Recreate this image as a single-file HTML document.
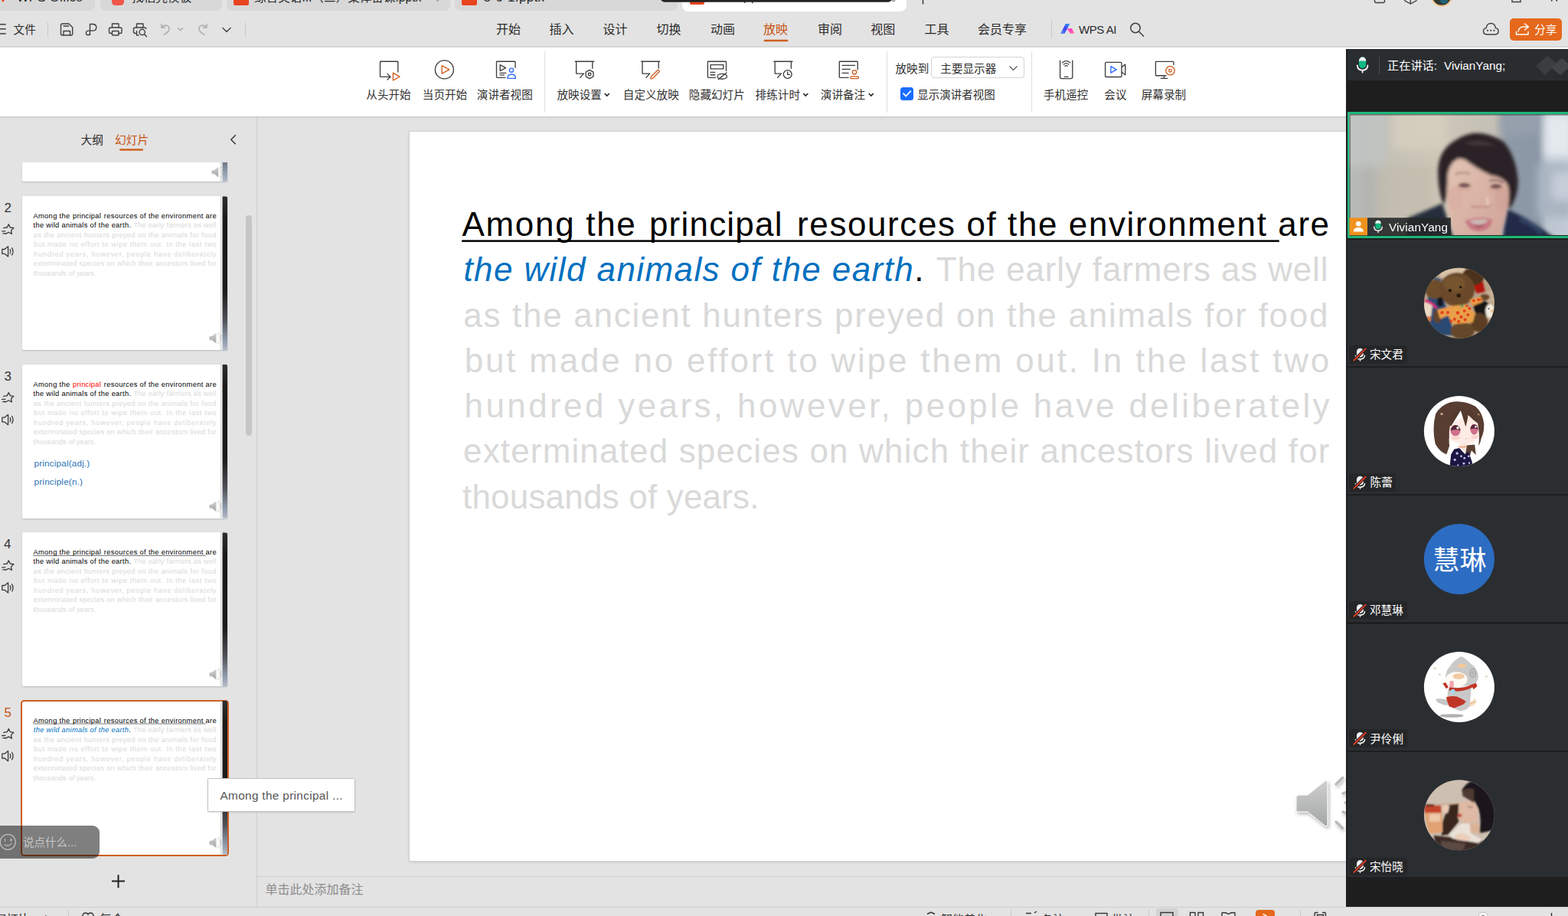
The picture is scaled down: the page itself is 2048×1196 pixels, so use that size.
<!DOCTYPE html>
<html><head><meta charset="utf-8"><title>WPS</title>
<style>
html,body{margin:0;padding:0;}
body{width:2048px;height:1196px;overflow:hidden;background:#e3e3e3;position:relative;font-family:"Liberation Sans",sans-serif;}
#root{position:absolute;left:0;top:0;width:2048px;height:1196px;overflow:hidden;}
#root div{position:absolute;box-sizing:border-box;}
#root>svg{position:absolute;left:0;top:0;}
.t{color:transparent;white-space:nowrap;font-size:10px;overflow:hidden;pointer-events:none;}
svg text{font-family:"Liberation Sans","Noto Sans CJK SC",sans-serif;}
</style></head><body><div id="root">
<svg width="0" height="0"><defs>
<rect id="UL" x="68.2" y="141.4" width="1067.6" height="2.5"/>
<g id="spk"><defs><linearGradient id="spg" x1="0" y1="0" x2="0" y2="1"><stop offset="0" stop-color="#cfcfcf"/><stop offset="1" stop-color="#a4a6a6"/></linearGradient>
<filter id="spf" x="-20%" y="-20%" width="150%" height="150%"><feDropShadow dx="1.5" dy="2.5" stdDeviation="2" flood-color="#000" flood-opacity=".3"/></filter></defs>
<g filter="url(#spf)"><path d="M1160 866 h13 l23 -18.500 q3 -1 3 2 v55 q0 3 -3 2 l-23 -18.500 h-13 q-2 0 -2 -2 v-17 q0 -2 2 -2z" fill="url(#spg)" stroke="#fff" stroke-width="1"/>
<g stroke="#b9b9b9" stroke-width="3.2" stroke-linecap="round" fill="none"><path d="M1210 852 l8.500 -8.500"/><path d="M1219 864 l10 -4"/><path d="M1222 876 l11 0"/><path d="M1219 888 l10 4"/><path d="M1210 901 l8.500 8.500"/></g></g></g>
<linearGradient id="band" x1="0" y1="0" x2="0" y2="1"><stop offset="0" stop-color="#2e2e2e"/><stop offset=".15" stop-color="#1a1a1a"/><stop offset=".62" stop-color="#1c1c1c"/><stop offset=".8" stop-color="#4c4f55"/><stop offset=".92" stop-color="#8791a2"/><stop offset="1" stop-color="#b3bcc9"/></linearGradient>
<g id="bandg"><rect x="1228" y="0" width="4" height="952" fill="#c4c4c4"/><path d="M1238.500 0 h21 q10 0 10 12 v940 h-31z" fill="url(#band)"/></g>
</defs></svg>
<div style="left:0;top:0;width:2048px;height:16px;background:#e3e3e3"></div><div style="left:-8px;top:-10px;width:132px;height:24px;background:#d8d8d8;border-radius:7px"></div><div style="left:131px;top:-10px;width:159px;height:24px;background:#d8d8d8;border-radius:7px"></div><div style="left:296px;top:-10px;width:292px;height:24px;background:#d8d8d8;border-radius:7px"></div><div style="left:594px;top:-10px;width:291px;height:24px;background:#d8d8d8;border-radius:7px"></div><div style="left:891px;top:-10px;width:293px;height:25px;background:#fff;border-radius:8px"></div><div style="left:0;top:16px;width:2048px;height:46px;background:#e3e3e3"></div><div style="left:1971.5px;top:23.8px;width:68.5px;height:29px;background:#e5681c;border-radius:5px"></div><div style="left:0;top:62px;width:2048px;height:90px;background:#fff"></div><div style="left:0;top:152px;width:2048px;height:5px;background:linear-gradient(#c9c9c9,#dedede 50%,#e3e3e3)"></div><div style="left:0;top:60px;width:2048px;height:2px;background:linear-gradient(#dcdcdc,#d2d2d2)"></div><div style="left:1216px;top:73.8px;width:121.5px;height:28.7px;background:#fff;border:1px solid #d4d4d4;border-radius:4px"></div><div style="left:1176px;top:113.8px;width:17px;height:17px;background:#1a6cff;border-radius:3.5px"></div><svg width="2048" height="1196"><path d="M-2 -6 L4 3 L10 -6 Z" fill="#e8441f"/><path d="M146 -8 h16 v10 q0 5 -5 5 h-6 q-5 0 -5 -5z" fill="#f0564a"/><rect x="305" y="-10" width="20" height="17" rx="2" fill="#e8441f"/><rect x="603" y="-10" width="20" height="17" rx="2" fill="#e8441f"/><rect x="901" y="-10" width="19" height="16" rx="2" fill="#e8441f"/><g fill="#2a2a2a"><text x="22" y="2.1" font-size="16.6" textLength="86">WPS Office</text><text x="172" y="1.6" font-size="15.6">找稻壳模板</text><text x="332" y="1.6" font-size="15.6">综合英语III（三）集体备课.pptx</text><text x="631.5" y="2.1" font-size="17" textLength="79.5">5-6-1.pptx</text></g><path d="M568 -2 l3.5 3.5 l3.5 -3.5" stroke="#aaa" stroke-width="1.3" fill="none"/><path d="M972.700 -5 v9 M982.700 -5 v9.300 M1205.500 -5 v10.500" stroke="#333" stroke-width="1.4"/><path d="M1162 -3 l5 5 M1172 -3 l-5 5" stroke="#888" stroke-width="1.2"/><rect x="863" y="-10" width="302" height="12.8" rx="5" fill="#242424"/><g fill="none" stroke="#3f3f3f" stroke-width="1.4"><rect x="1795.5" y="-10" width="13" height="13.5" rx="2"/><path d="M1809 -1 h3 v-8"/><path d="M1834 .5 l8.300 4.500 l8.300 -4.500 M1842.300 5 v-8"/><path d="M1975 -5 v7.5 h11 v-7.5"/><path d="M2025 -8 l5 5 l5 -5 M2026 1.5 l4 -4.5 l4 4.5" /></g><circle cx="1883" cy="-5.5" r="13.2" fill="#2c3a33" stroke="#f5c48a" stroke-width="2"/><circle cx="1886" cy="0" r="5" fill="#1f6f8a" opacity=".8"/><path d="M0 31.7 h7.7 M0 37.8 h7.7 M0 44 h7.7" stroke="#3f3f3f" stroke-width="1.5"/><text x="17.6" y="43.7" font-size="14.6" fill="#2b2b2b">文件</text><path d="M62.500 29 v19 M320.500 29 v19 M1373.500 26.500 v23.500" stroke="#c9c9c9" stroke-width="1"/><g fill="none" stroke="#3f3f3f" stroke-width="1.38" stroke-linejoin="round" stroke-linecap="round"><path d="M79.5 33 q0 -2 2 -2 h8.5 l4.7 4.7 v8.3 q0 2 -2 2 h-11.2 q-2 0 -2 -2z"/><path d="M83 34 h6.5 M83 46 v-5.5 h8.5 v5.5"/><path d="M117.5 45.5 v-14 h3.5 q4.8 0 4.8 4.3 q0 4.3 -4.8 4.3 h-5 q-3.6 0 -3.6 3 q0 2.8 2.6 2.8 q2.5 0 2.5 -2.8"/><path d="M146.5 36 v-5 h8.5 v5 M146.5 43.5 h-2 q-2 0 -2 -2 v-3.5 q0 -2 2 -2 h12.5 q2 0 2 2 v3.5 q0 2 -2 2 h-2.5"/><rect x="146.5" y="40.5" width="8.5" height="5.5" rx=".8"/><path d="M178.5 36 v-5 h8.5 v5 M178.5 43.5 h-2 q-2 0 -2 -2 v-3.5 q0 -2 2 -2 h12.5 q1.5 0 1.9 1.2 M178.5 40.5 v5.500 h2.5"/><circle cx="185.7" cy="42" r="3.7"/><path d="M188.5 44.8 l3 3"/><path d="M291 36.500 l5 5 l5 -5"/></g><g fill="none" stroke="#a9a9a9" stroke-width="1.4" stroke-linejoin="round" stroke-linecap="round"><path d="M211 31.5 v4.5 h4.5 M211.2 36 q3 -4 7 -2.6 q3.6 1.6 2.6 5.6 q-.8 2.6 -6.8 6.5"/><path d="M232.5 36.8 l3 3 l3 -3"/><path d="M270 31.5 v4.5 h-4.5 M269.8 36 q-3 -4 -7 -2.6 q-3.600 1.600 -2.600 5.600 q.8 2.600 6.800 6.500"/></g><g fill="#2b2b2b" font-size="16"><text x="648" y="44.300">开始</text><text x="717.5" y="44.300">插入</text><text x="787.5" y="44.300">设计</text><text x="857.5" y="44.300">切换</text><text x="928" y="44.300">动画</text><text x="997" y="44.300" fill="#c8520f">放映</text><text x="1068" y="44.300">审阅</text><text x="1137.2" y="44.300">视图</text><text x="1207.5" y="44.300">工具</text><text x="1277" y="44.300">会员专享</text></g><rect x="997.5" y="51.7" width="32" height="2.6" rx="1.3" fill="#d0601f"/><defs><linearGradient id="ai1" x1="0" y1="1" x2="1" y2="0"><stop offset="0" stop-color="#5a9cf2"/><stop offset=".5" stop-color="#3f3ff6"/><stop offset="1" stop-color="#2fa8e2"/></linearGradient><linearGradient id="ai2" x1="0" y1="0" x2="1" y2="1"><stop offset="0" stop-color="#ff3fc4"/><stop offset=".6" stop-color="#ff4fb8"/><stop offset="1" stop-color="#ffa0a8"/></linearGradient></defs><path d="M1385 43.900 L1391.900 30.900 h5.500 L1390.500 43.900z" fill="url(#ai1)"/><path d="M1393.600 37.400 l6.400 -.5 l3.5 7 h-5.200z" fill="url(#ai2)"/><text x="1409" y="43.900" font-size="15" fill="#2b2b2b" textLength="49.500">WPS AI</text><g fill="none" stroke="#3f3f3f" stroke-width="1.5" stroke-linecap="round"><circle cx="1483" cy="36.5" r="6.2"/><path d="M1487.6 41.2 l6 6"/></g><g fill="none" stroke="#3f3f3f" stroke-width="1.45"><path d="M1942 45 q-4.5 0 -4.5 -4.2 q0 -3.6 3.6 -4.2 q1 -6 6.2 -6 q5.2 0 6.2 6 q3.6 .6 3.6 4.2 q0 4.2 -4.5 4.2z"/></g><g fill="#3f3f3f"><circle cx="1943" cy="39.8" r="1.1"/><circle cx="1947.2" cy="39.8" r="1.1"/><circle cx="1951.4" cy="39.8" r="1.1"/></g><g fill="none" stroke="#fff" stroke-width="1.5" stroke-linecap="round" stroke-linejoin="round"><path d="M1991.5 31 l5 4 l-5 4 M1996 35 h-6 q-6 0 -7 6"/><path d="M1980.5 41.5 v3.5 h15.5 v-3.5"/></g><text x="2004" y="43.700" font-size="14.8" fill="#ffffff">分享</text><path d="M711.5 67 v80 M1158.5 67 v80 M1347.5 67 v80" stroke="#e2e2e2" stroke-width="1.3"/><g fill="#303030" font-size="14.6"><text x="478.3" y="128.600">从头开始</text><text x="551.8" y="128.600">当页开始</text><text x="622.8" y="128.600">演讲者视图</text><text x="727.5" y="128.600">放映设置</text><text x="813.8" y="128.600">自定义放映</text><text x="899.8" y="128.600">隐藏幻灯片</text><text x="986.6" y="128.600">排练计时</text><text x="1071.8" y="128.600">演讲备注</text><text x="1363" y="128.600">手机遥控</text><text x="1442.3" y="128.600">会议</text><text x="1490.7" y="128.600">屏幕录制</text></g><path d="M789.8 122 l3 3 l3 -3" fill="none" stroke="#222" stroke-width="1.6"/><path d="M1049.3 122 l3 3 l3 -3" fill="none" stroke="#222" stroke-width="1.6"/><path d="M1134.8 122 l3 3 l3 -3" fill="none" stroke="#222" stroke-width="1.6"/><g fill="none" stroke="#3f3f3f" stroke-width="1.35" stroke-linejoin="round" stroke-linecap="round"><path d="M519.8 94 v-13 q0 -.8 -.8 -.8 h-21.7 q-.8 0 -.8 .8 v18.5 q0 .8 .8 .8 h12.7 M506 96.6 l4 3.7 l-4 3.7"/><circle cx="580.4" cy="90.9" r="12"/><path d="M673 88.3 v-7.3 q0 -.8 -.8 -.8 h-22.9 q-.8 0 -.8 .8 v19.5 q0 .8 .8 .8 h10.7 M653.2 84.6 l7.3 4 l-7.3 4z M653 95.4 h7.7 M653 97.8 h5.4"/><path d="M751.3 80.2 h24.5 M752.7 80.2 v15.9 h9.8 l-4.7 5.2 M773.8 80.2 v9"/><path d="M770.1 91.3 l4.9 2.85 v5.7 l-4.9 2.85 l-4.9 -2.85 v-5.7z"/><circle cx="770.1" cy="97" r="1.8"/><path d="M837.7 80.2 h24 M839 80.2 v15.9 h9.7 l-4.7 5.2 M860.2 80.2 v9"/><path d="M948.5 92.5 v-11.5 q0 -.8 -.8 -.8 h-22.5 q-.8 0 -.8 .8 v19.5 q0 .8 .8 .8 h9.2"/><rect x="928.1" y="84.6" width="16.7" height="5.3"/><path d="M928 94.3 h5.8 M928 97.7 h5.8"/><ellipse cx="943.200" cy="99.800" rx="6.200" ry="3.400"/><path d="M938.300 103.600 l10.700 -8.600"/><path d="M1010.8 80.2 h24.2 M1012.2 80.2 v15.9 h8.2 l-4.7 5.2 M1033.4 80.2 v9"/><circle cx="1028.7" cy="97" r="5.4"/><path d="M1028.7 93.8 v3.6 h2.8"/><path d="M1120.2 90.9 v-9.9 q0 -.8 -.8 -.8 h-22.3 q-.8 0 -.8 .8 v19.5 q0 .8 .8 .8 h11 M1100.1 85.4 h16.4 M1100.1 90.4 h10.1 M1100.1 95.4 h8"/><path d="M1384.6 79.2 v21.4 q0 2 2 2 h12.2 q2 0 2 -2 v-21.4 M1390.3 100.3 h4.7"/><g stroke-width="1.15"><path d="M1387.400 82 q5.200 -4.600 10.400 0 M1389.200 84.200 q3.400 -3 6.800 0 M1390.900 86.300 q1.700 -1.500 3.400 0"/></g><rect x="1443.6" y="81.3" width="21.4" height="19.2" rx="1.5"/><path d="M1465 87.8 l4.7 -3.7 v13.6 l-4.7 -3.7"/><path d="M1532.9 84.6 v-3.4 q0 -.8 -.8 -.8 h-21.9 q-.8 0 -.8 .8 v16.7 q0 .8 .8 .8 h12.8 M1520.4 98.7 v3.7 M1516.2 102.4 h8.4"/></g><g fill="none" stroke="#cf5f22" stroke-width="1.35" stroke-linejoin="round"><path d="M513.4 95.1 l8.6 5 l-8.6 4.9z"/><path d="M577.2 85.7 l9.6 5.2 l-9.6 5.2z"/><path d="M850.200 100.200 l8.300 -8.300 q1 -1 2.100 .1 q1.100 1.100 .1 2.100 l-8.300 8.300 l-2.600 .5z"/><circle cx="1116" cy="94.3" r="2.7"/><rect x="1110.8" y="99.8" width="10.7" height="2.8" rx="1.4"/><circle cx="1528.4" cy="92.2" r="5.7"/><circle cx="1528.4" cy="92.2" r="1.8"/></g><g fill="none" stroke="#2b6bff" stroke-width="1.35" stroke-linejoin="round"><circle cx="668" cy="91.7" r="2.6"/><path d="M662.9 102.4 q0 -5.4 5.2 -5.4 q5.3 0 5.3 5.4z"/><path d="M1450.9 86.7 l7.3 4.2 l-7.3 4.2z"/></g><text x="1169.5" y="94.500" font-size="14.6" fill="#303030">放映到</text><text x="1228.3" y="94.500" font-size="14.6" fill="#303030">主要显示器</text><path d="M1318.5 86.5 l5 5 l5 -5" fill="none" stroke="#555" stroke-width="1.2"/><path d="M1180 122.1 l3.3 3.4 l6 -6.4" fill="none" stroke="#fff" stroke-width="1.8" stroke-linecap="round" stroke-linejoin="round"/><text x="1198.2" y="128.600" font-size="14.5" fill="#303030">显示演讲者视图</text></svg><div class="t" style="left:0;top:20px;width:1500px;height:12px">文件 开始 插入 设计 切换 动画 放映 审阅 视图 工具 会员专享 WPS AI 分享</div><div class="t" style="left:470px;top:110px;width:1200px;height:12px">从头开始 当页开始 演讲者视图 放映设置 自定义放映 隐藏幻灯片 排练计时 演讲备注 放映到 主要显示器 显示演讲者视图 手机遥控 会议 屏幕录制</div><div style="left:335px;top:153px;width:1px;height:1031px;background:#cfcfcf"></div><div style="left:336px;top:1144px;width:1712px;height:1px;background:#cfcfcf"></div><div style="left:321px;top:280.5px;width:8px;height:288px;background:#c6c6c6;border-radius:4px"></div><div style="left:29px;top:212px;width:268px;height:25px;background:#fff;box-shadow:0 1px 2px rgba(0,0,0,.18);border-radius:0 0 2px 2px"></div><div style="left:29px;top:256.2px;width:268px;height:201px;background:#fff;box-shadow:0 1px 2px rgba(0,0,0,.18);border-radius:2px"></div><div style="left:29px;top:475.8px;width:268px;height:201px;background:#fff;box-shadow:0 1px 2px rgba(0,0,0,.18);border-radius:2px"></div><div style="left:29px;top:695.2px;width:268px;height:201px;background:#fff;box-shadow:0 1px 2px rgba(0,0,0,.18);border-radius:2px"></div><div style="left:29px;top:914.9px;width:268px;height:201px;background:#fff;box-shadow:0 1px 2px rgba(0,0,0,.18);border-radius:2px"></div><div style="left:27.3px;top:914.3px;width:271.4px;height:204px;border:2px solid #cf5f22;border-radius:4.5px"></div><div style="left:533.6px;top:170.600px;width:1271px;height:954.400px;background:#fff;border:1px solid #d2d2d2;box-shadow:0 1px 3px rgba(0,0,0,.12)"></div><div class="t" style="left:603px;top:270px;width:1130px;height:400px;white-space:normal;font-size:20px">Among the principal resources of the environment are the wild animals of the earth. The early farmers as well as the ancient hunters preyed on the animals for food but made no effort to wipe them out. In the last two hundred years, however, people have deliberately exterminated species on which their ancestors lived for thousands of years.</div><div style="left:0;top:1184px;width:2048px;height:12px;background:#e3e3e3;border-top:1px solid #cdcdcd"></div><div style="left:1510px;top:1186px;width:29px;height:12px;background:#d2d2d2;border-radius:3px"></div><div style="left:1640px;top:1187.5px;width:25px;height:12px;background:#e5681c;border-radius:4px"></div><svg width="2048" height="1196"><text x="105.5" y="188" font-size="14.8" fill="#2b2b2b">大纲</text><text x="150" y="188" font-size="14.8" fill="#c8520f">幻灯片</text><rect x="156" y="194.2" width="31" height="2.5" rx="1.2" fill="#d0601f"/><path d="M307.8 176.3 l-6 6 l6 6" fill="none" stroke="#333" stroke-width="1.4"/><svg x="29" y="212" width="268" height="25" viewBox="0 833.6 1269.3 118.4" preserveAspectRatio="none" overflow="hidden"><use href="#bandg"/><use href="#spk" transform="translate(14 16)"/></svg><svg x="29" y="256.2" width="268" height="201" viewBox="0 0 1269.3 952" preserveAspectRatio="none" overflow="hidden"><use href="#bandg"/><g font-size="44" fill="#000"><text x="68.4" y="136" textLength="226.4">Among the</text><text x="312.9" y="136" textLength="173.6">principal</text><text x="506.1" y="136" textLength="695">resources of the environment are</text><text x="69" y="195.2" textLength="603.5">the wild animals of the earth.</text><text x="688.7" y="195.2" textLength="510.8" fill="#d9d9d9">The early farmers as well</text><g fill="#d9d9d9"><text x="70.2" y="254.5" textLength="1129.3">as the ancient hunters preyed on the animals for food</text><text x="71.7" y="313.8" textLength="1129.5">but made no effort to wipe them out. In the last two</text><text x="71.6" y="373" textLength="1130">hundred years, however, people have deliberately</text><text x="70" y="432.2" textLength="1131.5">exterminated species on which their ancestors lived for</text><text x="69" y="491.5" textLength="387.5">thousands of years.</text></g></g><use href="#spk"/></svg><text x="5.5" y="277.100" font-size="17" fill="#333">2</text><g fill="none" stroke="#3a3a3a" stroke-width="1.3" stroke-linejoin="round" stroke-linecap="round"><path d="M4.7 297.7 L9.3 297.0 L11.3 292.90000000000003 L13.3 297.0 L17.9 297.7 L14.5 300.90000000000003 L15.4 305.40000000000003 L11.3 303.2 L7.2 305.40000000000003 M2.600 301.8 h4.300 M3.800 304.9 h3.600"/><path d="M2.800 325.5 h3.200 l4.600 -3.800 v13.400 l-4.600 -3.800 h-3.200z M13.200 325.79999999999995 q1.600 2.600 0 5.200 M15.600 323.79999999999995 q2.900 4.600 0 9.200"/></g><svg x="29" y="475.8" width="268" height="201" viewBox="0 0 1269.3 952" preserveAspectRatio="none" overflow="hidden"><use href="#bandg"/><g font-size="44" fill="#000"><text x="68.4" y="136" textLength="226.4">Among the</text><text x="312.9" y="136" textLength="173.6" fill="#f00">principal</text><text x="506.1" y="136" textLength="695">resources of the environment are</text><text x="69" y="195.2" textLength="603.5">the wild animals of the earth.</text><text x="688.7" y="195.2" textLength="510.8" fill="#d9d9d9">The early farmers as well</text><g fill="#d9d9d9"><text x="70.2" y="254.5" textLength="1129.3">as the ancient hunters preyed on the animals for food</text><text x="71.7" y="313.8" textLength="1129.5">but made no effort to wipe them out. In the last two</text><text x="71.6" y="373" textLength="1130">hundred years, however, people have deliberately</text><text x="70" y="432.2" textLength="1131.5">exterminated species on which their ancestors lived for</text><text x="69" y="491.5" textLength="387.5">thousands of years.</text></g><g font-size="56" fill="#2e75b6"><text x="73.8" y="632" textLength="344.4">principal(adj.)</text><text x="73.8" y="746" textLength="300.4">principle(n.)</text></g></g><use href="#spk"/></svg><text x="5.5" y="496.700" font-size="17" fill="#333">3</text><g fill="none" stroke="#3a3a3a" stroke-width="1.3" stroke-linejoin="round" stroke-linecap="round"><path d="M4.7 517.3 L9.3 516.6 L11.3 512.5 L13.3 516.6 L17.9 517.3 L14.5 520.5 L15.4 525.0 L11.3 522.8 L7.2 525.0 M2.600 521.4 h4.300 M3.800 524.5 h3.600"/><path d="M2.800 545.1 h3.200 l4.600 -3.800 v13.400 l-4.600 -3.800 h-3.200z M13.200 545.4 q1.600 2.600 0 5.200 M15.600 543.4 q2.900 4.600 0 9.200"/></g><svg x="29" y="695.2" width="268" height="201" viewBox="0 0 1269.3 952" preserveAspectRatio="none" overflow="hidden"><use href="#bandg"/><g font-size="44" fill="#000"><text x="68.4" y="136" textLength="226.4">Among the</text><text x="312.9" y="136" textLength="173.6">principal</text><text x="506.1" y="136" textLength="695">resources of the environment are</text><use href="#UL" fill="#000"/><text x="69" y="195.2" textLength="603.5">the wild animals of the earth.</text><text x="688.7" y="195.2" textLength="510.8" fill="#d9d9d9">The early farmers as well</text><g fill="#d9d9d9"><text x="70.2" y="254.5" textLength="1129.3">as the ancient hunters preyed on the animals for food</text><text x="71.7" y="313.8" textLength="1129.5">but made no effort to wipe them out. In the last two</text><text x="71.6" y="373" textLength="1130">hundred years, however, people have deliberately</text><text x="70" y="432.2" textLength="1131.5">exterminated species on which their ancestors lived for</text><text x="69" y="491.5" textLength="387.5">thousands of years.</text></g></g><use href="#spk"/></svg><text x="5" y="716.100" font-size="17" fill="#333">4</text><g fill="none" stroke="#3a3a3a" stroke-width="1.3" stroke-linejoin="round" stroke-linecap="round"><path d="M4.7 736.7 L9.3 736.0000000000001 L11.3 731.9000000000001 L13.3 736.0000000000001 L17.9 736.7 L14.5 739.9000000000001 L15.4 744.4000000000001 L11.3 742.2 L7.2 744.4000000000001 M2.600 740.8000000000001 h4.300 M3.800 743.9000000000001 h3.600"/><path d="M2.800 764.5 h3.200 l4.600 -3.800 v13.400 l-4.600 -3.800 h-3.200z M13.200 764.8000000000001 q1.600 2.600 0 5.200 M15.600 762.8000000000001 q2.900 4.600 0 9.200"/></g><svg x="29" y="914.9" width="268" height="201" viewBox="0 0 1269.3 952" preserveAspectRatio="none" overflow="hidden"><use href="#bandg"/><g font-size="44" fill="#000"><text x="68.4" y="136" textLength="226.4">Among the</text><text x="312.9" y="136" textLength="173.6">principal</text><text x="506.1" y="136" textLength="695">resources of the environment are</text><use href="#UL" fill="#000"/><text x="70.4" y="195.2" textLength="601"><tspan fill="#0070c0" font-style="italic">the wild animals of the earth</tspan>.</text><text x="687.8" y="195.2" textLength="511.7" fill="#d9d9d9">The early farmers as well</text><g fill="#d9d9d9"><text x="70.2" y="254.5" textLength="1129.3">as the ancient hunters preyed on the animals for food</text><text x="71.7" y="313.8" textLength="1129.5">but made no effort to wipe them out. In the last two</text><text x="71.6" y="373" textLength="1130">hundred years, however, people have deliberately</text><text x="70" y="432.2" textLength="1131.5">exterminated species on which their ancestors lived for</text><text x="69" y="491.5" textLength="387.5">thousands of years.</text></g></g><use href="#spk"/></svg><text x="5.5" y="935.800" font-size="17" fill="#c8520f">5</text><g fill="none" stroke="#3a3a3a" stroke-width="1.3" stroke-linejoin="round" stroke-linecap="round"><path d="M4.7 956.4 L9.3 955.7 L11.3 951.6 L13.3 955.7 L17.9 956.4 L14.5 959.6 L15.4 964.1 L11.3 961.9 L7.2 964.1 M2.600 960.5 h4.300 M3.800 963.6 h3.600"/><path d="M2.800 984.1999999999999 h3.200 l4.600 -3.800 v13.400 l-4.600 -3.800 h-3.200z M13.200 984.5 q1.600 2.600 0 5.200 M15.600 982.5 q2.900 4.600 0 9.200"/></g><path d="M146 1150.6 h17 M154.5 1142.2 v17" stroke="#222" stroke-width="2"/><svg x="535" y="172" width="1269.3" height="952" viewBox="0 0 1269.3 952" overflow="hidden"><use href="#bandg"/><g font-size="44" fill="#000"><text x="68.4" y="136" textLength="226.4">Among the</text><text x="312.9" y="136" textLength="173.6">principal</text><text x="506.1" y="136" textLength="695">resources of the environment are</text><use href="#UL" fill="#000"/><text x="70.4" y="195.2" textLength="601"><tspan fill="#0070c0" font-style="italic">the wild animals of the earth</tspan>.</text><text x="687.8" y="195.2" textLength="511.7" fill="#d9d9d9">The early farmers as well</text><g fill="#d9d9d9"><text x="70.2" y="254.5" textLength="1129.3">as the ancient hunters preyed on the animals for food</text><text x="71.7" y="313.8" textLength="1129.5">but made no effort to wipe them out. In the last two</text><text x="71.6" y="373" textLength="1130">hundred years, however, people have deliberately</text><text x="70" y="432.2" textLength="1131.5">exterminated species on which their ancestors lived for</text><text x="69" y="491.5" textLength="387.5">thousands of years.</text></g></g><use href="#spk"/></svg><text x="346.5" y="1167" font-size="16" fill="#8c8c8c">单击此处添加备注</text><text transform="translate(-8 0)" x="0.5" y="1205.900" font-size="15.500" fill="#2b2b2b">幻灯片 5 / 13</text><text x="130.2" y="1205.900" font-size="15.500" fill="#2b2b2b">复合</text><text x="1229.2" y="1205.700" font-size="15" fill="#2b2b2b">智能美化</text><text x="1360.2" y="1205.700" font-size="15" fill="#2b2b2b">备注</text><text x="1452.2" y="1205.700" font-size="15" fill="#2b2b2b">批注</text><text x="1757.5" y="1205.900" font-size="15.500" fill="#2b2b2b" textLength="38">100%</text><path d="M89.5 1188 v8 M1320.5 1188 v8 M1500.5 1188 v8 M1698.5 1188 v8" stroke="#c9c9c9"/><g fill="none" stroke="#333" stroke-width="1.4"><path d="M108 1196 q0 -4 4 -4 q2 0 3 2 q1 -2 3 -2 q4 0 4 4"/><path d="M1211 1193.5 l5 -2.5 l5 2.5"/><path d="M1340 1192.5 h7 M1351 1192 l3 -2"/><rect x="1431" y="1192.5" width="15" height="8"/><rect x="1516" y="1191.5" width="16" height="8"/><rect x="1554.5" y="1191.5" width="6.5" height="8"/><rect x="1565" y="1191.5" width="6.5" height="8"/><path d="M1596 1196 v-4 q4 -1.5 8.5 1.5 q4.500 -3 8.500 -1.500 v4"/><path d="M1717 1196 v-3 q0 -1.500 1.500 -1.500 h3 M1727 1191.500 h3 q1.500 0 1.500 1.500 v3 M1720.500 1196 v-1.500 h8 v1.500"/><path d="M2026.500 1192 v4"/></g><circle cx="1937" cy="1197" r="6" fill="#fff" stroke="#bbb" stroke-width="1"/><circle cx="1937" cy="1197" r="2.5" fill="#888"/><path d="M1649.500 1193.500 l5 2.500" stroke="#fff" stroke-width="1.5"/></svg><div style="left:-10px;top:1077.5px;width:139.5px;height:43px;background:rgba(0,0,0,.5);border-radius:9px"></div><div style="left:271.300px;top:1015.600px;width:192.700px;height:44.400px;background:#fff;border:1px solid #c2c2c2;border-radius:1.5px;box-shadow:0 1px 2px rgba(0,0,0,.12)"></div><div class="t" style="left:287px;top:1030px;width:170px;height:14px">Among the principal ...</div><svg width="2048" height="1196"><g fill="none" stroke="#bcbcbc" stroke-width="1.3" stroke-linecap="round" stroke-linejoin="round"><circle cx="10.300" cy="1099.400" r="10"/><path d="M6.200 1102.800 q4.600 3.400 8.600 -1.400 M6.500 1095.600 v2.600 M15.300 1095.400 l-2 1.400 l2 1.400"/></g><text x="30" y="1105.200" font-size="14.5" fill="#c6c6c6">说点什么...</text><text x="287.5" y="1043.900" font-size="15.3" fill="#555555" textLength="160">Among the principal ...</text></svg><div style="left:1758.3px;top:63.8px;width:291px;height:1120.4px;background:#1e1e1e"></div><div style="left:1759.6px;top:63.800px;width:291px;height:41.700px;background:#2a2d30"></div><div style="left:1759.5px;top:146.3px;width:292px;height:164.7px;background:#1fb67b"></div><div style="left:1759.6px;top:313.2px;width:291px;height:165.1px;background:#2b2e31"></div><div style="left:1762.3px;top:451.1px;width:75.6px;height:23.800px;background:#242628;border-radius:2px"></div><div style="left:1759.6px;top:480.3px;width:291px;height:165.1px;background:#2b2e31"></div><div style="left:1762.3px;top:618.2px;width:60.5px;height:23.800px;background:#242628;border-radius:2px"></div><div style="left:1759.6px;top:647.4px;width:291px;height:165.1px;background:#2b2e31"></div><div style="left:1762.3px;top:785.3px;width:75.6px;height:23.800px;background:#242628;border-radius:2px"></div><div style="left:1759.6px;top:814.5px;width:291px;height:165.1px;background:#2b2e31"></div><div style="left:1762.3px;top:952.4px;width:75.6px;height:23.800px;background:#242628;border-radius:2px"></div><div style="left:1759.6px;top:981.6px;width:291px;height:163.9px;background:#2b2e31"></div><div style="left:1762.3px;top:1119.5px;width:75.6px;height:23.800px;background:#242628;border-radius:2px"></div><svg width="2048" height="1196"><g transform="translate(1779.6 84.6) scale(1.0)"><rect x="-4.6" y="-10" width="9.2" height="14.4" rx="4.6" fill="#10b981"/><path d="M-4.6 -4.600 v-.8 a4.600 4.600 0 0 1 9.200 0 v.8 q-4.600 -1.600 -9.200 0z" fill="#f4f4f4"/><path d="M-6.800 .8 q.4 6.200 6.800 6.200 q6.400 0 6.800 -6.200 M0 7 v3" fill="none" stroke="#f4f4f4" stroke-width="1.900" stroke-linecap="round"/></g><path d="M1801.5 73.500 v23.500" stroke="#45484b" stroke-width="1"/><text x="1812" y="91.200" font-size="15.2" fill="#ffffff">正在讲话:</text><text x="1886" y="91.200" font-size="15.3" fill="#ffffff" textLength="80.200">VivianYang;</text><g fill="#3b3e41"><path d="M2006 86 l15 -13 l12 10 l-15 15z"/><path d="M2026 88 l14 -12 l12 10 l-14 12z" fill="#424548"/></g><svg x="1762.5" y="149.3" width="286" height="158.7" viewBox="0 0 286 158.7" overflow="hidden">
<defs><filter id="b6" x="-30%" y="-30%" width="160%" height="160%"><feGaussianBlur stdDeviation="40"/></filter><filter id="b3" x="-30%" y="-30%" width="160%" height="160%"><feGaussianBlur stdDeviation="14"/></filter><filter id="b2" x="-30%" y="-30%" width="160%" height="160%"><feGaussianBlur stdDeviation="16"/></filter><filter id="b1" x="-30%" y="-30%" width="160%" height="160%"><feGaussianBlur stdDeviation="10"/></filter>
<linearGradient id="vbg" x1="0" y1="0" x2="1" y2="0"><stop offset="0" stop-color="#b9bcba"/><stop offset=".1" stop-color="#b4b5b1"/><stop offset=".2" stop-color="#c6c2b6"/><stop offset=".42" stop-color="#cec7b8"/><stop offset=".66" stop-color="#c4c0b6"/><stop offset=".72" stop-color="#8f9aa8"/><stop offset=".86" stop-color="#8b97a6"/><stop offset=".9" stop-color="#bcc5cf"/><stop offset="1" stop-color="#c3ccd6"/></linearGradient>
<linearGradient id="skin" x1="0" y1="0" x2="1" y2="1"><stop offset="0" stop-color="#e3c4b4"/><stop offset=".5" stop-color="#d9b3a5"/><stop offset="1" stop-color="#cfa397"/></linearGradient></defs>
<g transform="translate(-2.5 -3.3) scale(.140625)">
<rect width="2060" height="1190" fill="url(#vbg)"/>
<g filter="url(#b6)"><rect x="-50" y="-50" width="420" height="560" fill="#c2c5c3" opacity=".8"/><rect x="420" y="-50" width="500" height="400" fill="#d6cfbf" opacity=".8"/><rect x="300" y="500" width="500" height="500" fill="#c2bbad" opacity=".7"/><rect x="1830" y="20" width="260" height="400" fill="#e4e9ee"/><rect x="1760" y="480" width="330" height="500" fill="#a9b4c1"/><rect x="1900" y="560" width="190" height="260" fill="#c6ced8"/><rect x="1450" y="-50" width="320" height="260" fill="#96a0ad"/></g>
<g filter="url(#b2)"><path d="M540 1200 L560 985 Q700 930 880 850 L1000 1200z" fill="#262d3d"/><path d="M1440 1200 L1470 900 Q1700 990 1960 1200z" fill="#212c46"/><path d="M1600 1000 q120 40 200 130" stroke="#34466a" stroke-width="30" fill="none"/></g>
<g filter="url(#b3)"><path d="M840 540 Q850 350 1000 265 Q1200 125 1450 275 Q1570 420 1585 650 Q1580 800 1500 910 L1440 700 L1000 500 L940 700 L900 870 Q840 760 840 540z" fill="#2b2427"/>
<path d="M930 640 Q920 520 1010 430 L1250 470 L1470 640 Q1510 700 1495 830 Q1490 950 1440 1080 L1420 1200 L1010 1200 Q960 1060 935 920 Q915 800 930 640z" fill="url(#skin)"/>
<path d="M985 470 Q1000 370 1100 315 Q1300 240 1450 390 Q1530 500 1500 690 Q1440 600 1330 590 Q1180 520 1060 420 Q1010 440 985 470z" fill="#2b2427"/><path d="M1080 300 q140 -60 300 20 q-140 -20 -300 -20z" fill="#4a3c40"/></g>
<g filter="url(#b1)"><ellipse cx="1085" cy="683" rx="55" ry="20" fill="#4a3436"/><ellipse cx="1380" cy="692" rx="52" ry="20" fill="#4a3436"/><ellipse cx="1085" cy="700" rx="75" ry="40" fill="#c9948c" opacity=".35"/><ellipse cx="1380" cy="708" rx="72" ry="40" fill="#c9948c" opacity=".35"/><path d="M1000 580 q70 -30 140 -5" stroke="#b39084" stroke-width="16" fill="none"/><path d="M1320 640 q70 -20 130 20" stroke="#8d6e68" stroke-width="16" fill="none"/>
<ellipse cx="1000" cy="800" rx="70" ry="110" fill="#d6a79e" opacity=".45"/><ellipse cx="1430" cy="810" rx="60" ry="110" fill="#cf9c93" opacity=".45"/>
<path d="M1150 870 q40 25 80 8 q50 18 100 -10" stroke="#b98676" stroke-width="12" fill="none"/><path d="M1290 790 q20 40 10 80" stroke="#e6cbc0" stroke-width="22" fill="none"/>
<path d="M1095 1010 Q1220 960 1345 1000 Q1330 1100 1220 1110 Q1120 1100 1095 1010z" fill="#c87882"/><path d="M1130 1012 Q1220 985 1310 1008 Q1270 1050 1220 1048 Q1160 1046 1130 1012z" fill="#cdb9b6"/><path d="M1160 1045 q60 20 120 -4 q-20 30 -60 32 q-40 -2 -60 -28z" fill="#a34c5c"/></g>
</g>
<rect x=".5" y=".5" width="290" height="157.7" fill="none" stroke="#1f2a25" stroke-width="1"/>
</svg><rect x="1762.600" y="284.300" width="23.400" height="23" fill="#f0921e"/><rect x="1786" y="284.300" width="109" height="23" fill="#262829" fill-opacity=".9"/><g fill="#fff"><circle cx="1774.300" cy="292.300" r="3.300"/><path d="M1767.800 302.500 q0 -5.500 6.500 -5.500 q6.500 0 6.500 5.500z"/></g><g transform="translate(1800 295.6) scale(0.78)"><rect x="-4.6" y="-10" width="9.2" height="14.4" rx="4.6" fill="#10b981"/><path d="M-4.6 -4.600 v-.8 a4.600 4.600 0 0 1 9.200 0 v.8 q-4.600 -1.600 -9.200 0z" fill="#f4f4f4"/><path d="M-6.800 .8 q.4 6.200 6.800 6.200 q6.400 0 6.800 -6.200 M0 7 v3" fill="none" stroke="#f4f4f4" stroke-width="1.900" stroke-linecap="round"/></g><text x="1814" y="301.500" font-size="15.3" fill="#ffffff" textLength="77">VivianYang</text><defs><clipPath id="avc"><circle cx="0" cy="0" r="46"/></clipPath><filter id="ab" x="-20%" y="-20%" width="140%" height="140%"><feGaussianBlur stdDeviation="1.2"/></filter><filter id="ab2" x="-20%" y="-20%" width="140%" height="140%"><feGaussianBlur stdDeviation="2.500"/></filter><filter id="abz" x="-10%" y="-10%" width="120%" height="120%"><feGaussianBlur stdDeviation="11"/></filter><filter id="abs" x="-10%" y="-10%" width="120%" height="120%"><feGaussianBlur stdDeviation="5"/></filter></defs><g transform="translate(1905.9 395.8)"><g clip-path="url(#avc)"><g transform="translate(-50 -50) scale(.08361)"><rect width="1200" height="1200" fill="#b8a088"/><g filter="url(#abz)">
<path d="M300 40 L700 40 L650 160 L300 200z" fill="#d9c3a6"/><path d="M120 470 L340 500 L470 880 L500 1100 L250 1100 L60 820z" fill="#2c4a72"/><path d="M180 180 L330 230 L260 340z" fill="#3a5878"/><path d="M250 470 L350 500 L340 650 L260 640z" fill="#15151c"/>
<path d="M40 600 q80 -20 140 40 l-20 160 l-110 20z" fill="#ead9c2"/><path d="M90 800 l70 10 l-10 80 l-50 -20z" fill="#e07a28"/>
<path d="M55 562 Q150 570 245 680" stroke="#e3267c" stroke-width="34" fill="none"/>
<path d="M800 300 L965 255 L1005 425 L870 445z" fill="#b3170f"/><path d="M950 460 L1150 380 L1150 600 L1000 560z" fill="#c7b194"/>
<ellipse cx="810" cy="185" rx="175" ry="135" fill="#4b331b"/><ellipse cx="215" cy="380" rx="155" ry="150" fill="#6d4d2b"/><ellipse cx="565" cy="385" rx="275" ry="265" fill="#6b4a29"/><ellipse cx="520" cy="300" rx="170" ry="120" fill="#7a5832" opacity=".7"/>
<path d="M820 640 L1000 560 L1100 640 L1020 800 L850 760z" fill="#141414"/>
<ellipse cx="1000" cy="505" rx="75" ry="50" fill="#6a4a2a"/>
<ellipse cx="260" cy="800" rx="65" ry="105" fill="#63452a"/>
<ellipse cx="910" cy="900" rx="135" ry="150" fill="#5a3e24"/><ellipse cx="650" cy="1030" rx="185" ry="135" fill="#65472a"/>
<path d="M430 650 L700 615 L850 760 L810 900 L500 925 L425 800z" fill="#e9a04a"/><path d="M255 700 L465 650 L485 765 L300 845z" fill="#ec9c48"/><path d="M760 545 L940 500 L965 580 L800 645z" fill="#ea9a44"/>
<ellipse cx="1080" cy="720" rx="72" ry="112" fill="#f1ece0"/><path d="M1090 700 l60 10 l-50 40z" fill="#f09a28"/><rect x="620" y="625" width="40" height="35" fill="#1f9a6a"/></g>
<g fill="#e2431c" filter="url(#abs)"><circle cx="330" cy="745" r="26"/><circle cx="420" cy="745" r="24"/><circle cx="575" cy="750" r="27"/><circle cx="680" cy="720" r="24"/><circle cx="760" cy="680" r="24"/><circle cx="720" cy="640" r="20"/><circle cx="735" cy="780" r="25"/><circle cx="630" cy="815" r="26"/><circle cx="525" cy="850" r="25"/><circle cx="690" cy="855" r="25"/><circle cx="590" cy="885" r="24"/><circle cx="470" cy="880" r="22"/><circle cx="825" cy="560" r="22"/><circle cx="900" cy="545" r="22"/><circle cx="940" cy="545" r="14"/></g>
<g filter="url(#abs)"><circle cx="455" cy="400" r="24" fill="#1d130c"/><circle cx="620" cy="347" r="20" fill="#1d130c"/><ellipse cx="590" cy="477" rx="34" ry="30" fill="#2a1b10"/><circle cx="1060" cy="685" r="10" fill="#222"/></g></g></g></g><g transform="translate(1776.5 463.1) scale(1.0)"><rect x="-4.500" y="-8.400" width="9" height="11.800" rx="4.500" fill="#f4f4f4"/><path d="M-6 1.200 q.4 4.600 6 4.600 q5.600 0 6 -4.600 M0 5.800 v2" fill="none" stroke="#f4f4f4" stroke-width="1.500" stroke-linecap="round"/><path d="M-8.500 7.800 L7.600 -8.100" stroke="#25272a" stroke-width="4"/><path d="M-8.600 7.900 L7.700 -8.200" stroke="#e8391f" stroke-width="1.900"/></g><text x="1789" y="468" font-size="14.6" fill="#ffffff">宋文君</text><g transform="translate(1905.9 562.9)"><g clip-path="url(#avc)"><g transform="translate(-50 -50) scale(.08361)"><rect width="1200" height="1200" fill="#fff"/><g filter="url(#abs)">
<path d="M700 820 L840 810 L860 970 L790 900 L760 1000 L700 960z" fill="#5b3f33"/>
<path d="M230 330 Q300 200 450 150 Q640 100 850 210 Q960 300 985 480 Q990 620 945 700 Q930 780 900 830 Q915 700 905 620 L880 470 L740 350 L620 280 L520 420 L455 560 Q430 700 445 830 L400 960 Q300 930 225 800 Q170 560 230 330z" fill="#583c31"/>
<path d="M455 520 Q600 380 750 360 L885 470 Q915 600 895 700 Q850 790 700 805 Q540 800 450 720 Q430 620 455 520z" fill="#fdebe4"/>
<path d="M600 800 L720 800 L705 910 L640 900z" fill="#fbe4da"/><path d="M575 825 Q650 850 715 820 L712 850 Q650 870 585 850z" fill="#f0b392"/>
<path d="M520 880 L600 862 L685 955 L742 918 L800 1080 L805 1160 L450 1160 L470 960z" fill="#1f1742"/>
<ellipse cx="540" cy="590" rx="76" ry="86" fill="#cf6f8b"/><path d="M464 590 a76 86 0 0 1 152 0 q-76 -30 -152 0z" fill="#54283a"/><ellipse cx="832" cy="572" rx="60" ry="80" fill="#cf6f8b"/><path d="M772 572 a60 80 0 0 1 120 0 q-60 -28 -120 0z" fill="#54283a"/><circle cx="575" cy="548" r="20" fill="#fff"/><circle cx="855" cy="530" r="16" fill="#fff"/>
<ellipse cx="540" cy="700" rx="70" ry="30" fill="#f9cfc9" opacity=".8"/><ellipse cx="840" cy="690" rx="55" ry="28" fill="#f9cfc9" opacity=".8"/>
<path d="M620 270 Q660 400 700 530 Q730 420 740 340 Q800 420 880 470 Q840 330 760 260z" fill="#553a2f"/><path d="M620 270 Q560 380 470 520 Q450 420 520 300z" fill="#553a2f"/>
<path d="M300 330 q30 -40 50 10 q-30 20 -50 -10z" fill="#c9a78c"/><path d="M880 330 q30 -20 40 20 q-30 10 -40 -20z" fill="#b89274"/>
<path d="M690 715 q15 10 30 0 M745 712 q10 6 20 0" stroke="#b98a80" stroke-width="6" fill="none"/></g>
<g fill="#c9c6ee"><circle cx="565" cy="945" r="20"/><circle cx="630" cy="990" r="17"/><circle cx="680" cy="1020" r="17"/><circle cx="530" cy="1045" r="19"/><circle cx="745" cy="990" r="15"/><circle cx="670" cy="1105" r="17"/><circle cx="755" cy="1095" r="14"/><circle cx="580" cy="1130" r="13"/></g></g></g></g><g transform="translate(1776.5 630.1999999999999) scale(1.0)"><rect x="-4.500" y="-8.400" width="9" height="11.800" rx="4.500" fill="#f4f4f4"/><path d="M-6 1.200 q.4 4.600 6 4.600 q5.600 0 6 -4.600 M0 5.800 v2" fill="none" stroke="#f4f4f4" stroke-width="1.500" stroke-linecap="round"/><path d="M-8.500 7.800 L7.600 -8.100" stroke="#25272a" stroke-width="4"/><path d="M-8.600 7.900 L7.700 -8.200" stroke="#e8391f" stroke-width="1.900"/></g><text x="1789.6" y="635.200" font-size="14.6" fill="#ffffff">陈蕾</text><g transform="translate(1905.9 730.0)"><g clip-path="url(#avc)"><rect x="-50" y="-50" width="100" height="100" fill="#2c6cc2"/></g></g><g transform="translate(1776.5 797.3) scale(1.0)"><rect x="-4.500" y="-8.400" width="9" height="11.800" rx="4.500" fill="#f4f4f4"/><path d="M-6 1.200 q.4 4.600 6 4.600 q5.600 0 6 -4.600 M0 5.800 v2" fill="none" stroke="#f4f4f4" stroke-width="1.500" stroke-linecap="round"/><path d="M-8.500 7.800 L7.600 -8.100" stroke="#25272a" stroke-width="4"/><path d="M-8.600 7.900 L7.700 -8.200" stroke="#e8391f" stroke-width="1.900"/></g><text x="1789" y="802.300" font-size="14.6" fill="#ffffff">邓慧琳</text><g transform="translate(1905.9 897.1)"><g clip-path="url(#avc)"><g transform="translate(-50 -50) scale(.08361)"><rect width="1200" height="1200" fill="#fff"/><g filter="url(#abs)">
<ellipse cx="480" cy="1045" rx="185" ry="28" fill="#b1b1b1"/>
<path d="M230 785 Q300 770 410 790 L430 885 Q330 880 250 830z" fill="#c6c6c6"/>
<path d="M720 860 Q800 850 830 780 Q870 790 870 830 Q830 900 750 905z" fill="#f6dcc0"/><path d="M770 870 l25 -40 M810 850 l25 -30" stroke="#e8b888" stroke-width="18"/>
<path d="M425 620 L790 590 L760 900 Q690 980 600 970 L440 900 Q400 760 425 620z" fill="#c9c9c9"/>
<path d="M395 755 Q480 735 560 745 Q650 780 705 825 L665 865 L520 925 L440 900 Q410 830 395 755z" fill="#c13427"/>
<path d="M630 118 Q700 150 780 235 Q880 290 900 440 Q880 530 820 560 L500 610 Q400 590 385 470 Q380 380 420 320 Q500 180 630 118z" fill="#c9c9c9"/>
<ellipse cx="555" cy="480" rx="172" ry="120" fill="#fffaf4"/><ellipse cx="590" cy="430" rx="92" ry="44" fill="#f1caa0"/><ellipse cx="640" cy="265" rx="66" ry="34" fill="#f3c897"/>
<ellipse cx="810" cy="380" rx="46" ry="66" fill="#c2c2c2" stroke="#999" stroke-width="12"/><ellipse cx="808" cy="375" rx="18" ry="30" fill="#b3b3b3"/>
<rect x="450" y="500" width="62" height="105" rx="18" fill="#f3a4ad"/>
<path d="M440 600 Q620 640 800 555 L810 600 Q640 690 445 655z" fill="#c13427"/><path d="M340 540 L385 525 L430 600 L395 625z" fill="#c13427"/><path d="M790 560 L860 535 L880 585 L820 635z" fill="#c13427"/>
<circle cx="500" cy="665" r="36" fill="#a3d6ee"/><path d="M470 300 q-30 -30 -10 -50 q30 10 10 50z" fill="#eed6bd"/></g>
<g fill="#e3d2bb"><path d="M190 295 q25 -15 50 10 l-15 25z"/><path d="M270 395 q25 -15 45 5 l-15 25z"/><path d="M1005 420 q25 -10 40 10 l-25 25z"/></g></g></g></g><g transform="translate(1776.5 964.4) scale(1.0)"><rect x="-4.500" y="-8.400" width="9" height="11.800" rx="4.500" fill="#f4f4f4"/><path d="M-6 1.200 q.4 4.600 6 4.600 q5.600 0 6 -4.600 M0 5.800 v2" fill="none" stroke="#f4f4f4" stroke-width="1.500" stroke-linecap="round"/><path d="M-8.500 7.800 L7.600 -8.100" stroke="#25272a" stroke-width="4"/><path d="M-8.600 7.900 L7.700 -8.200" stroke="#e8391f" stroke-width="1.900"/></g><text x="1789.2" y="969.500" font-size="14.6" fill="#ffffff">尹伶俐</text><g transform="translate(1905.9 1064.2)"><g clip-path="url(#avc)"><g transform="translate(-50 -50) scale(.08361)"><rect width="1200" height="1200" fill="#cdbfb2"/><g filter="url(#abz)">
<path d="M60 430 L700 400 L700 480 L60 520z" fill="#c9a58a" opacity=".6"/>
<path d="M440 440 L610 420 L590 700 L430 900 L320 915 L340 700z" fill="#38251b"/>
<path d="M200 915 L900 995 L1000 1000 L850 1200 L250 1200z" fill="#3d2c25"/><path d="M300 1000 L700 1040 L650 1160 L350 1120z" fill="#5b4a42"/>
<path d="M440 905 L620 730 L765 730 L775 880 L965 985 L900 1035 L500 965z" fill="#e9e1d7"/>
<path d="M640 210 Q700 100 800 60 L1200 200 L1200 820 L900 885 Q960 700 900 500 L830 380 Q740 330 660 300z" fill="#1b181a"/>
<path d="M590 410 Q700 370 830 380 Q905 480 885 680 Q800 730 700 722 Q600 690 575 640 Q590 560 590 410z" fill="#dfb9a3"/>
<path d="M760 735 L900 715 L925 885 L780 865z" fill="#dcb297"/>
<path d="M660 210 Q740 160 830 200 L825 410 Q740 350 650 300z" fill="#4e3a33"/><path d="M830 200 L900 180 L960 500 L830 380z" fill="#1b181a"/>
<path d="M520 925 Q600 870 660 885 L800 950 L700 1005 L560 985z" fill="#ebcdb9"/>
<path d="M55 450 L310 450 L320 565 L55 565z" fill="#c4452b"/><path d="M70 432 L205 432 L205 462 L70 462z" fill="#55281a"/>
<path d="M60 565 L330 560 L340 860 Q230 900 120 880z" fill="#e2a273"/><path d="M130 580 L300 580 L300 700 L130 700z" fill="#f0d3b8" opacity=".8"/>
<path d="M335 450 Q400 430 445 465 L420 565 L340 565z" fill="#ebcbb6"/>
<ellipse cx="605" cy="605" rx="34" ry="26" fill="#bf463c"/><path d="M730 455 q40 25 80 25" stroke="#4a3630" stroke-width="10" fill="none"/></g></g></g></g><g transform="translate(1776.5 1131.5) scale(1.0)"><rect x="-4.500" y="-8.400" width="9" height="11.800" rx="4.500" fill="#f4f4f4"/><path d="M-6 1.200 q.4 4.600 6 4.600 q5.600 0 6 -4.600 M0 5.800 v2" fill="none" stroke="#f4f4f4" stroke-width="1.500" stroke-linecap="round"/><path d="M-8.500 7.800 L7.600 -8.100" stroke="#25272a" stroke-width="4"/><path d="M-8.600 7.900 L7.700 -8.200" stroke="#e8391f" stroke-width="1.900"/></g><text x="1789" y="1136.500" font-size="14.6" fill="#ffffff">宋怡晓</text><text x="1906.5" y="744.300" font-size="35" fill="#ffffff" text-anchor="middle">慧琳</text></svg><div class="t" style="left:1765px;top:80px;width:270px;height:12px">正在讲话: VivianYang; 宋文君 陈蕾 慧琳 邓慧琳 尹伶俐 宋怡晓</div>
</div></body></html>
